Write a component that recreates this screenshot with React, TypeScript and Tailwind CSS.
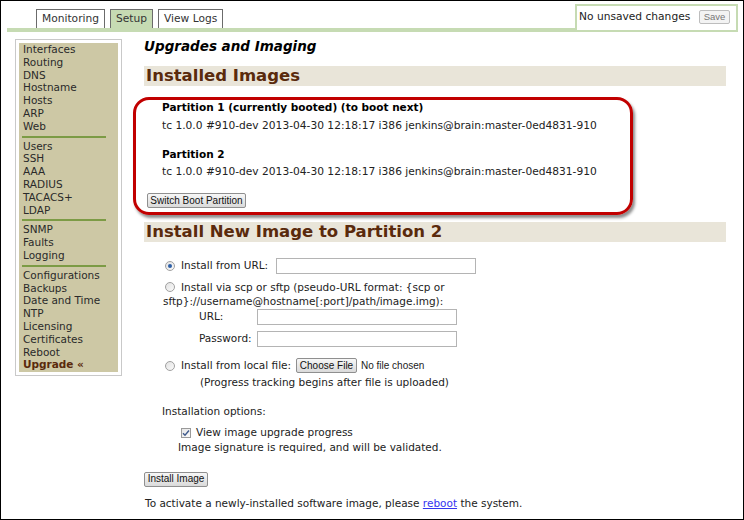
import React from "react";

const V = "font-['DejaVu_Sans',Verdana,sans-serif]";
const A = "font-['Liberation_Sans',Arial,sans-serif]";

function Btn({ children, className = "" }: { children: React.ReactNode; className?: string }) {
  return (
    <div
      className={`${A} inline-flex items-center justify-center whitespace-nowrap h-[15px] text-[10px] leading-none text-[#111] border border-[#8f8f8f] rounded-[2px] bg-gradient-to-b from-[#f7f7f7] to-[#dadada] ${className}`}
    >
      {children}
    </div>
  );
}

function Radio({ checked = false }: { checked?: boolean }) {
  return (
    <div className="w-[10px] h-[10px] rounded-full border border-[#a0a0a0] bg-gradient-to-br from-[#e2e2e2] to-[#fafafa] flex items-center justify-center shrink-0">
      {checked && <div className="w-[4px] h-[4px] rounded-full bg-[#2d5fa6]" />}
    </div>
  );
}

function Field({ className = "" }: { className?: string }) {
  return <div className={`h-[16px] w-[200px] border border-[#b4b4b4] bg-white ${className}`} />;
}

const groups: string[][] = [
  ["Interfaces", "Routing", "DNS", "Hostname", "Hosts", "ARP", "Web"],
  ["Users", "SSH", "AAA", "RADIUS", "TACACS+", "LDAP"],
  ["SNMP", "Faults", "Logging"],
  ["Configurations", "Backups", "Date and Time", "NTP", "Licensing", "Certificates", "Reboot"],
];

export default function App() {
  return (
    <div className={`w-[744px] h-[520px] bg-white border border-black overflow-hidden flex flex-col ${V} text-[#222]`}>
      {/* header */}
      <div className="flex items-end pt-[3px] pr-[5px]">
        <div className="flex-1 flex flex-col">
          <div className="flex gap-[5px] pl-[35px] text-[10.67px] text-[#333]">
            <div className="h-[19px] px-[5px] flex items-center border border-b-0 border-[#6b6b6b] bg-white">Monitoring</div>
            <div className="h-[19px] px-[5px] flex items-center border border-b-0 border-[#6b6b6b] bg-[#c6dbb3]">Setup</div>
            <div className="h-[19px] px-[5px] flex items-center border border-b-0 border-[#6b6b6b] bg-white">View Logs</div>
          </div>
          <div className="h-[4px] ml-[6px] bg-[#c6dbb3]" />
        </div>
        <div className="w-[163px] h-[28px] border-2 border-[#c6dbb3] bg-white flex items-center pl-[2px] pr-[6px] pb-[2px] text-[10.67px] text-[#222]">
          <span className="flex-1">No unsaved changes</span>
          <div className={`${A} h-[14px] w-[31px] flex items-center justify-center text-[9.5px] text-[#777] border border-[#bdbdbd] rounded-[2px] bg-[#f3f3f3]`}>Save</div>
        </div>
      </div>

      {/* body */}
      <div className="flex">
        {/* sidebar */}
        <div className="ml-[14px] mt-[7px] w-[107px] h-[337px] border border-[#c9c9c9] p-[3px] shrink-0">
          <div className="h-full bg-[#cdc8a5] pl-[4px] text-[10.5px] leading-[12.8px] text-[#2a2a2a]">
            {groups.map((g, gi) => (
              <div key={gi}>
                {g.map((item) => (
                  <div key={item}>{item}</div>
                ))}
                {gi < 3 ? (
                  <div className="mt-[3px] mb-[2px] h-[2px] w-[84px] -ml-[1px] bg-[#7c9b45]" />
                ) : (
                  <div className="font-bold text-[#5a2a0c]">Upgrade «</div>
                )}
              </div>
            ))}
          </div>
        </div>

        {/* main */}
        <div className="ml-[22px] w-[582px] pt-[5px] flex flex-col text-[10.5px]">
          <div className="h-[18px] leading-[18px] text-[13.5px] font-bold italic text-black">Upgrades and Imaging</div>
          <div className="mt-[11px] h-[20px] bg-[#e9e5d9] pl-[2px] flex items-center text-[16.5px] font-bold text-[#5a2a0c]">Installed Images</div>

          <div className="mt-[11px] -ml-[11px] w-[500px] h-[118px] border-[3px] border-[#c10000] rounded-[16px] shadow-[2px_3px_3px_rgba(0,0,0,0.45)] pl-[11px] flex flex-col">
            <div className="ml-[15px] h-[14px] leading-[14px] font-bold text-black">Partition 1 (currently booted) (to boot next)</div>
            <div className="ml-[15px] mt-[4.5px] h-[13px] leading-[13px] text-[10.67px]">tc 1.0.0 #910-dev 2013-04-30 12:18:17 i386 jenkins@brain:master-0ed4831-910</div>
            <div className="ml-[15px] mt-[15.5px] h-[14px] leading-[14px] font-bold text-black">Partition 2</div>
            <div className="ml-[15px] mt-[3.5px] h-[13px] leading-[13px] text-[10.67px]">tc 1.0.0 #910-dev 2013-04-30 12:18:17 i386 jenkins@brain:master-0ed4831-910</div>
            <div className="mt-[15.5px] flex">
              <Btn className="w-[99px]">Switch Boot Partition</Btn>
            </div>
          </div>

          <div className="mt-[7px] h-[20px] bg-[#e9e5d9] pl-[2px] flex items-center text-[16.5px] font-bold text-[#5a2a0c]">Install New Image to Partition 2</div>

          <div className="mt-[16px] h-[16px] flex items-center pl-[21px]">
            <Radio checked />
            <span className="ml-[6px] w-[95px]">Install from URL:</span>
            <Field />
          </div>

          <div className="mt-[6px] leading-[14px] pl-[19px]">
            <div className="flex items-center pl-[2px]">
              <Radio />
              <span className="ml-[6px]">Install via scp or sftp (pseudo-URL format: {"{"}scp or</span>
            </div>
            <div>sftp{"}"}://username@hostname[:port]/path/image.img):</div>
          </div>

          <div className="mt-[1px] h-[16px] flex items-center pl-[55px]">
            <span className="w-[58px]">URL:</span>
            <Field />
          </div>
          <div className="mt-[6px] h-[16px] flex items-center pl-[55px]">
            <span className="w-[58px]">Password:</span>
            <Field />
          </div>

          <div className="mt-[11px] h-[15px] flex items-center pl-[21px]">
            <Radio />
            <span className="ml-[6px] w-[115px]">Install from local file:</span>
            <Btn className="w-[61px]">Choose File</Btn>
            <span className={`${A} ml-[4px] text-[10px] text-[#222]`}>No file chosen</span>
          </div>
          <div className="mt-[3px] h-[13px] leading-[13px] pl-[56px]">(Progress tracking begins after file is uploaded)</div>

          <div className="mt-[16px] h-[13px] leading-[13px] pl-[18px]">Installation options:</div>
          <div className="mt-[8px] h-[13px] flex items-center pl-[37px]">
            <div className="w-[10px] h-[10px] border border-[#9a9a9a] bg-gradient-to-br from-[#e6e6e6] to-[#fafafa] flex items-center justify-center shrink-0">
              <svg width="8" height="8" viewBox="0 0 8 8">
                <path d="M1 4.2 L3 6.2 L7 1.5" fill="none" stroke="#3f5a8c" strokeWidth="1.4" />
              </svg>
            </div>
            <span className="ml-[5px]">View image upgrade progress</span>
          </div>
          <div className="mt-[2px] h-[13px] leading-[13px] pl-[34px]">Image signature is required, and will be validated.</div>

          <div className="mt-[17.5px] flex">
            <Btn className="w-[64px]">Install Image</Btn>
          </div>

          <div className="mt-[10.5px] h-[13px] leading-[13px] pl-[1px]">
            To activate a newly-installed software image, please <span className="text-[#3434f0] underline">reboot</span> the system.
          </div>
        </div>
      </div>
    </div>
  );
}
